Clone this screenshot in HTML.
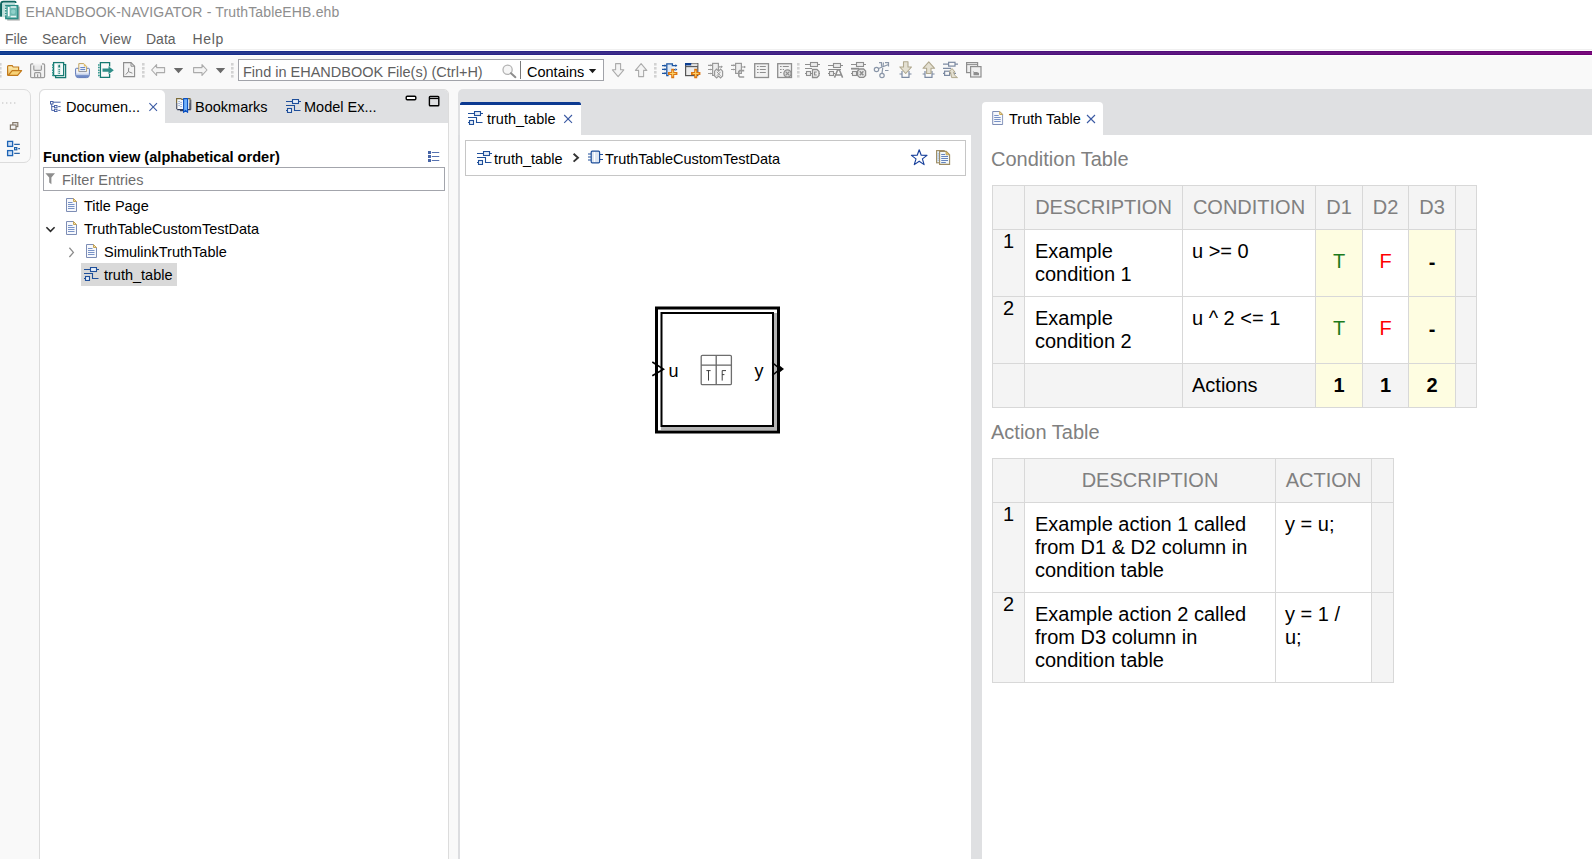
<!DOCTYPE html>
<html><head><meta charset="utf-8">
<style>
*{box-sizing:border-box}
html,body{margin:0;padding:0}
body{width:1592px;height:859px;overflow:hidden;position:relative;background:#f9f9f9;font-family:"Liberation Sans",sans-serif;color:#000}
.a{position:absolute}
.t{position:absolute;white-space:nowrap;line-height:1}
svg.ov{position:absolute;left:0;top:0;width:1592px;height:859px;overflow:visible;z-index:5}
.ui{font-size:14.5px}
.th{margin-top:1px;font-size:20px;line-height:23px;color:#808080;text-align:center;white-space:nowrap}
.td{margin-top:1px;font-size:20px;line-height:23px;color:#000;white-space:nowrap}
</style></head><body>
<!-- top white area -->
<div class="a" style="left:0;top:0;width:1592px;height:56px;background:#fff"></div>
<div class="a" style="left:0;top:49px;width:1592px;height:1px;background:#f0f0f0"></div>
<div class="a" style="left:0;top:51px;width:1592px;height:4px;background:linear-gradient(90deg,#08368f,#3c1a82 50%,#6e0073)"></div>
<div class="a" style="left:0;top:52px;width:1592px;height:2px;background:linear-gradient(90deg,#184293,#472787 50%,#790a7c)"></div>

<!-- title -->
<div class="t" style="left:25.5px;top:5px;font-size:14px;letter-spacing:.15px;color:#8e8e8e">EHANDBOOK-NAVIGATOR - TruthTableEHB.ehb</div>
<!-- menu -->
<div class="t" style="left:5px;top:32px;font-size:14px;color:#606060">File</div>
<div class="t" style="left:42px;top:32px;font-size:14px;color:#606060">Search</div>
<div class="t" style="left:100px;top:32px;font-size:14px;letter-spacing:.35px;color:#606060">View</div>
<div class="t" style="left:146px;top:32px;font-size:14px;color:#606060">Data</div>
<div class="t" style="left:192.5px;top:32px;font-size:14px;letter-spacing:.7px;color:#606060">Help</div>

<!-- search box -->
<div class="a" style="left:238px;top:59px;width:366px;height:22px;background:#fff;border:1px solid #a1a3a9"></div>
<div class="a" style="left:520px;top:61px;width:1px;height:18px;background:#7a7a7a"></div>
<div class="t" style="left:243px;top:65px;font-size:14.5px;color:#5f5f5f">Find in EHANDBOOK File(s) (Ctrl+H)</div>
<div class="t" style="left:527px;top:65px;font-size:14.5px;color:#000">Contains</div>

<!-- left minimized stack -->
<div class="a" style="left:-8px;top:89px;width:39px;height:74px;border:1px solid #dcdcdc;border-radius:0 7px 7px 0;background:#f9f9f9"></div>

<!-- left panel -->
<div class="a" style="left:39px;top:89px;width:410px;height:790px;border:1px solid #dcdcdc;border-radius:5px 5px 0 0;background:#fff;overflow:hidden">
  <div class="a" style="left:0;top:0;width:408px;height:33px;background:#dfe0e2"></div>
  <div class="a" style="left:0;top:0;width:125px;height:34px;background:#fff;border-radius:5px 5px 0 0"></div>
</div>
<div class="t ui" style="left:66px;top:100px;">Documen...</div>
<div class="t ui" style="left:195px;top:100px;">Bookmarks</div>
<div class="t ui" style="left:304px;top:100px;">Model Ex...</div>

<div class="t" style="left:43px;top:150px;font-size:14.6px;font-weight:bold">Function view (alphabetical order)</div>
<div class="a" style="left:43px;top:167px;width:402px;height:24px;border:1px solid #a3a5ac;background:#fff"></div>
<div class="t ui" style="left:62px;top:173px;color:#6d6d6d">Filter Entries</div>
<div class="a" style="left:81px;top:263px;width:96px;height:23px;background:#d9d9d9"></div>
<div class="t ui" style="left:84px;top:199px;">Title Page</div>
<div class="t ui" style="left:84px;top:222px;">TruthTableCustomTestData</div>
<div class="t ui" style="left:104px;top:245px;">SimulinkTruthTable</div>
<div class="t ui" style="left:104px;top:268px;">truth_table</div>

<!-- editor area -->
<div class="a" style="left:458px;top:89px;width:1134px;height:770px;background:#dfe0e2;border-radius:5px 0 0 0"></div>
<div class="a" style="left:458px;top:135px;width:2px;height:724px;background:#dcdde0"></div>
<div class="a" style="left:460px;top:135px;width:511px;height:724px;background:#fff"></div>
<div class="a" style="left:460px;top:102px;width:121px;height:34px;background:#fff"></div>
<div class="a" style="left:460px;top:102px;width:121px;height:3px;background:#0c3a91;border-radius:2px 2px 0 0"></div>
<div class="t ui" style="left:487px;top:112px;">truth_table</div>

<div class="a" style="left:465px;top:140px;width:501px;height:36px;border:1px solid #c6c6c6;background:#fff"></div>
<div class="t ui" style="left:494px;top:152px;">truth_table</div>
<div class="t ui" style="left:605px;top:152px;">TruthTableCustomTestData</div>

<div class="a" style="left:982px;top:135px;width:610px;height:724px;background:#fff"></div>
<div class="a" style="left:982px;top:102px;width:121px;height:34px;background:#fff;border-radius:4px 4px 0 0"></div>
<div class="t ui" style="left:1009px;top:112px;">Truth Table</div>

<div class="a" style="left:993px;top:186px;width:31px;height:43px;background:#f4f4f4"></div>
<div class="a" style="left:1025px;top:186px;width:157px;height:43px;background:#f4f4f4"></div>
<div class="a" style="left:1183px;top:186px;width:132px;height:43px;background:#f4f4f4"></div>
<div class="a" style="left:1316px;top:186px;width:46px;height:43px;background:#f4f4f4"></div>
<div class="a" style="left:1363px;top:186px;width:45px;height:43px;background:#f4f4f4"></div>
<div class="a" style="left:1409px;top:186px;width:46px;height:43px;background:#f4f4f4"></div>
<div class="a" style="left:1456px;top:186px;width:20px;height:43px;background:#f4f4f4"></div>
<div class="a" style="left:993px;top:230px;width:31px;height:66px;background:#f4f4f4"></div>
<div class="a" style="left:1025px;top:230px;width:157px;height:66px;background:#fff"></div>
<div class="a" style="left:1183px;top:230px;width:132px;height:66px;background:#fff"></div>
<div class="a" style="left:1316px;top:230px;width:46px;height:66px;background:#fefde1"></div>
<div class="a" style="left:1363px;top:230px;width:45px;height:66px;background:#fff"></div>
<div class="a" style="left:1409px;top:230px;width:46px;height:66px;background:#fefde1"></div>
<div class="a" style="left:1456px;top:230px;width:20px;height:66px;background:#f4f4f4"></div>
<div class="a" style="left:993px;top:297px;width:31px;height:66px;background:#f4f4f4"></div>
<div class="a" style="left:1025px;top:297px;width:157px;height:66px;background:#fff"></div>
<div class="a" style="left:1183px;top:297px;width:132px;height:66px;background:#fff"></div>
<div class="a" style="left:1316px;top:297px;width:46px;height:66px;background:#fefde1"></div>
<div class="a" style="left:1363px;top:297px;width:45px;height:66px;background:#fff"></div>
<div class="a" style="left:1409px;top:297px;width:46px;height:66px;background:#fefde1"></div>
<div class="a" style="left:1456px;top:297px;width:20px;height:66px;background:#f4f4f4"></div>
<div class="a" style="left:993px;top:364px;width:31px;height:43px;background:#f4f4f4"></div>
<div class="a" style="left:1025px;top:364px;width:157px;height:43px;background:#f4f4f4"></div>
<div class="a" style="left:1183px;top:364px;width:132px;height:43px;background:#f4f4f4"></div>
<div class="a" style="left:1316px;top:364px;width:46px;height:43px;background:#fefde1"></div>
<div class="a" style="left:1363px;top:364px;width:45px;height:43px;background:#f4f4f4"></div>
<div class="a" style="left:1409px;top:364px;width:46px;height:43px;background:#fefde1"></div>
<div class="a" style="left:1456px;top:364px;width:20px;height:43px;background:#f4f4f4"></div>
<div class="a" style="left:992px;top:185px;width:1px;height:223px;background:#d8d8d8"></div>
<div class="a" style="left:1024px;top:185px;width:1px;height:223px;background:#d8d8d8"></div>
<div class="a" style="left:1182px;top:185px;width:1px;height:223px;background:#d8d8d8"></div>
<div class="a" style="left:1315px;top:185px;width:1px;height:223px;background:#d8d8d8"></div>
<div class="a" style="left:1362px;top:185px;width:1px;height:223px;background:#d8d8d8"></div>
<div class="a" style="left:1408px;top:185px;width:1px;height:223px;background:#d8d8d8"></div>
<div class="a" style="left:1455px;top:185px;width:1px;height:223px;background:#d8d8d8"></div>
<div class="a" style="left:1476px;top:185px;width:1px;height:223px;background:#d8d8d8"></div>
<div class="a" style="left:992px;top:185px;width:485px;height:1px;background:#d8d8d8"></div>
<div class="a" style="left:992px;top:229px;width:485px;height:1px;background:#d8d8d8"></div>
<div class="a" style="left:992px;top:296px;width:485px;height:1px;background:#d8d8d8"></div>
<div class="a" style="left:992px;top:363px;width:485px;height:1px;background:#d8d8d8"></div>
<div class="a" style="left:992px;top:407px;width:485px;height:1px;background:#d8d8d8"></div>
<div class="a" style="left:993px;top:459px;width:31px;height:43px;background:#f4f4f4"></div>
<div class="a" style="left:1025px;top:459px;width:250px;height:43px;background:#f4f4f4"></div>
<div class="a" style="left:1276px;top:459px;width:95px;height:43px;background:#f4f4f4"></div>
<div class="a" style="left:1372px;top:459px;width:21px;height:43px;background:#f4f4f4"></div>
<div class="a" style="left:993px;top:503px;width:31px;height:89px;background:#f4f4f4"></div>
<div class="a" style="left:1025px;top:503px;width:250px;height:89px;background:#fff"></div>
<div class="a" style="left:1276px;top:503px;width:95px;height:89px;background:#fff"></div>
<div class="a" style="left:1372px;top:503px;width:21px;height:89px;background:#f4f4f4"></div>
<div class="a" style="left:993px;top:593px;width:31px;height:89px;background:#f4f4f4"></div>
<div class="a" style="left:1025px;top:593px;width:250px;height:89px;background:#fff"></div>
<div class="a" style="left:1276px;top:593px;width:95px;height:89px;background:#fff"></div>
<div class="a" style="left:1372px;top:593px;width:21px;height:89px;background:#f4f4f4"></div>
<div class="a" style="left:992px;top:458px;width:1px;height:225px;background:#d8d8d8"></div>
<div class="a" style="left:1024px;top:458px;width:1px;height:225px;background:#d8d8d8"></div>
<div class="a" style="left:1275px;top:458px;width:1px;height:225px;background:#d8d8d8"></div>
<div class="a" style="left:1371px;top:458px;width:1px;height:225px;background:#d8d8d8"></div>
<div class="a" style="left:1393px;top:458px;width:1px;height:225px;background:#d8d8d8"></div>
<div class="a" style="left:992px;top:458px;width:402px;height:1px;background:#d8d8d8"></div>
<div class="a" style="left:992px;top:502px;width:402px;height:1px;background:#d8d8d8"></div>
<div class="a" style="left:992px;top:592px;width:402px;height:1px;background:#d8d8d8"></div>
<div class="a" style="left:992px;top:682px;width:402px;height:1px;background:#d8d8d8"></div>

<div class="t" style="left:991px;top:148px;font-size:20px;line-height:23px;color:#808080">Condition Table</div>
<div class="a th" style="left:1025px;top:195px;width:157px">DESCRIPTION</div>
<div class="a th" style="left:1183px;top:195px;width:132px">CONDITION</div>
<div class="a th" style="left:1316px;top:195px;width:46px">D1</div>
<div class="a th" style="left:1363px;top:195px;width:45px">D2</div>
<div class="a th" style="left:1409px;top:195px;width:46px">D3</div>
<div class="a td" style="left:993px;top:229px;width:31px;text-align:center">1</div>
<div class="a td" style="left:1035px;top:239px">Example<br>condition 1</div>
<div class="a td" style="left:1192px;top:239px">u &gt;= 0</div>
<div class="a td" style="left:1316px;top:249px;width:46px;text-align:center;color:#1c7a1c">T</div>
<div class="a td" style="left:1363px;top:249px;width:45px;text-align:center;color:#f00">F</div>
<div class="a td" style="left:1409px;top:250px;width:46px;text-align:center;font-weight:bold">-</div>
<div class="a td" style="left:993px;top:296px;width:31px;text-align:center">2</div>
<div class="a td" style="left:1035px;top:306px">Example<br>condition 2</div>
<div class="a td" style="left:1192px;top:306px">u ^ 2 &lt;= 1</div>
<div class="a td" style="left:1316px;top:316px;width:46px;text-align:center;color:#1c7a1c">T</div>
<div class="a td" style="left:1363px;top:316px;width:45px;text-align:center;color:#f00">F</div>
<div class="a td" style="left:1409px;top:317px;width:46px;text-align:center;font-weight:bold">-</div>
<div class="a td" style="left:1192px;top:373px">Actions</div>
<div class="a td" style="left:1316px;top:373px;width:46px;text-align:center;font-weight:bold">1</div>
<div class="a td" style="left:1363px;top:373px;width:45px;text-align:center;font-weight:bold">1</div>
<div class="a td" style="left:1409px;top:373px;width:46px;text-align:center;font-weight:bold">2</div>

<div class="t" style="left:991px;top:421px;font-size:20px;line-height:23px;color:#808080">Action Table</div>
<div class="a th" style="left:1025px;top:468px;width:250px">DESCRIPTION</div>
<div class="a th" style="left:1276px;top:468px;width:95px">ACTION</div>
<div class="a td" style="left:993px;top:502px;width:31px;text-align:center">1</div>
<div class="a td" style="left:1035px;top:512px">Example action 1 called<br>from D1 &amp; D2 column in<br>condition table</div>
<div class="a td" style="left:1285px;top:512px">y = u;</div>
<div class="a td" style="left:993px;top:592px;width:31px;text-align:center">2</div>
<div class="a td" style="left:1035px;top:602px">Example action 2 called<br>from D3 column in<br>condition table</div>
<div class="a td" style="left:1285px;top:602px">y = 1 /<br>u;</div>

<svg class="ov" viewBox="0 0 1592 859">
<g id="diagram">
 <rect x="656.5" y="308" width="122" height="124" fill="none" stroke="#000" stroke-width="3"/>
 <rect x="774" y="313" width="3" height="117" fill="#b4b4b4"/>
 <rect x="661" y="427" width="116" height="3" fill="#b4b4b4"/>
 <rect x="661.5" y="313" width="111.5" height="113" fill="#fff" stroke="#000" stroke-width="2"/>
 <path d="M652.3 362 L663.5 369.2 L652.3 375.8" fill="none" stroke="#000" stroke-width="1.6"/>
 <path d="M772.2 362.5 L780 369 L772.2 375.5" fill="none" stroke="#000" stroke-width="1.6"/>
 <path d="M779.5 365.5 L784 369 L779.5 372.5 Z" fill="#000"/>
 <rect x="701.2" y="355.4" width="30.2" height="29.2" rx="1.2" fill="none" stroke="#6e6e6e" stroke-width="1.3"/>
 <path d="M716.2 355.4 V384.6 M701.2 365.1 H731.4" stroke="#666" stroke-width="1.3"/>
 <path d="M706.4 370.6 H710.6 M708.5 370.6 V380.6" stroke="#2a2a2a" stroke-width=".9"/>
 <path d="M722.2 380.6 V370.6 H726 M722.2 374.6 H724.4" stroke="#2a2a2a" stroke-width=".9" fill="none"/>
</g>
</svg>
<div class="t" style="left:668.5px;top:362px;font-size:18px;color:#000;z-index:6">u</div>
<div class="t" style="left:754.5px;top:362px;font-size:18px;color:#000;z-index:6">y</div>

<!-- ICONS --><svg class="ov" viewBox="0 0 1592 859" style="z-index:7">
<defs>
 <symbol id="struct" viewBox="0 0 15 14">
  <rect x="6.5" y="0.5" width="6" height="4" fill="#e6eef9" stroke="#1f4f9a" stroke-width="1.1"/>
  <path d="M0 2.5 H6.5 M12.5 2.5 H15 M0 6.5 H8.5 V11.5 H14.5 M0 11.5 H1.5" fill="none" stroke="#1f4f9a" stroke-width="1.1"/>
  <rect x="1.5" y="9.5" width="4" height="4" fill="#e6eef9" stroke="#1f4f9a" stroke-width="1.1"/>
 </symbol>
 <symbol id="doc" viewBox="0 0 11 14">
  <path d="M0.5 0.5 H7.5 L10.5 3.5 V13.5 H0.5 Z" fill="#f6f8fc" stroke="#7d8db5" stroke-width="1"/>
  <path d="M7.5 0.5 V3.5 H10.5 Z" fill="#f3e2a6" stroke="#c4a45a" stroke-width="1"/>
  <path d="M2 4.5 H6.5 M2 6.5 H8.5 M2 8.5 H8.5 M2 10.5 H8.5" stroke="#6a86c0" stroke-width=".9"/>
 </symbol>
 <symbol id="grip" viewBox="0 0 3 15">
  <rect x="0" y="0" width="2.6" height="2.6" fill="#d2d2d2"/>
  <rect x="0" y="4" width="2.6" height="2.6" fill="#d2d2d2"/>
  <rect x="0" y="8" width="2.6" height="2.6" fill="#d2d2d2"/>
  <rect x="0" y="12" width="2.6" height="2.6" fill="#d2d2d2"/>
 </symbol>
 <symbol id="plus" viewBox="0 0 10 10">
  <path d="M5 0.8 V9.2 M0.8 5 H9.2" stroke="#dc7612" stroke-width="3.2" stroke-linecap="square"/>
  <path d="M5 1.8 V8.2 M1.8 5 H8.2" stroke="#fbd26a" stroke-width="1.2"/>
 </symbol>
 <linearGradient id="prg" x1="0" y1="0" x2="0" y2="1"><stop offset="0" stop-color="#f4f7fc"/><stop offset=".45" stop-color="#f0f3fa"/><stop offset="1" stop-color="#7f99cf"/></linearGradient>
 <linearGradient id="fold" x1="0" y1="0" x2="0" y2="1"><stop offset="0" stop-color="#fdf0b8"/><stop offset="1" stop-color="#f0c060"/></linearGradient>
</defs>

<!-- app icon -->
<g>
 <path d="M1 16.5 V4 Q1 1.6 3.4 1.6 H14.6 Q15.8 1.6 15.8 3" fill="#d6ebe8" stroke="#0f6660" stroke-width="1.6"/>
 <rect x="0.2" y="3.5" width="2" height="13" fill="#0f6660"/>
 <rect x="2.2" y="3.2" width="12.8" height="14" fill="#bfe0dc"/>
 <rect x="7.2" y="6.6" width="12.6" height="14" fill="#9a9a9a" opacity=".75"/>
 <rect x="5.8" y="5.6" width="12" height="13" fill="#6cb8b1" stroke="#2a8c85" stroke-width="1.4"/>
 <path d="M4.8 7 H6.4 M4.8 9.6 H6.4 M4.8 12.2 H6.4 M4.8 14.8 H6.4" stroke="#fff" stroke-width="1"/>
 <path d="M8.8 7 V16.2" stroke="#fff" stroke-width="1.6"/>
 <path d="M10.6 7 H16.2 M10.6 16.4 H16.2" stroke="#e9f5f4" stroke-width="1.5"/>
 <circle cx="13.2" cy="11.8" r="2.2" fill="#8fd0c9"/>
</g>
<!-- toolbar -->
<use href="#grip" x="-1" y="63" width="3" height="15"/>
<path d="M7.6 75.4 V66.6 Q7.6 65.6 8.6 65.6 H12.2 L13.2 67 H18.6 V70.5" fill="url(#fold)" stroke="#c27a1c" stroke-width="1.2"/>
<path d="M8.2 75.4 L12.2 70.6 H21.6 L17.6 75.4 Z" fill="#f7d377" stroke="#c27a1c" stroke-width="1.2" stroke-linejoin="round"/>

<path d="M30.6 65 Q30.6 63.8 31.8 63.8 H43.4 Q44.6 63.8 44.6 65 V76.4 Q44.6 77.6 43.4 77.6 H31.8 Q30.6 77.6 30.6 76.4 Z" fill="#f1f1f1"/>
<path d="M33.2 63.8 H31.8 Q30.6 63.8 30.6 65 V76.4 Q30.6 77.6 31.8 77.6 H43.4 Q44.6 77.6 44.6 76.4 V65 Q44.6 63.8 43.4 63.8 H42" fill="none" stroke="#9b9b9b" stroke-width="1.2"/>
<path d="M33.8 65.4 V69.2 Q33.8 70.4 35 70.4 H40.2 Q41.4 70.4 41.4 69.2 V65.4" fill="#e9e9e9" stroke="#9b9b9b" stroke-width="1.2"/>
<path d="M34.6 77.4 V73.6 Q34.6 72.6 35.6 72.6 H39.6 Q40.6 72.6 40.6 73.6 V77.4 M37.6 74.2 V77.4" fill="none" stroke="#9b9b9b" stroke-width="1.2"/>
<rect x="55.6" y="64.6" width="10" height="13" fill="#fff" stroke="#167a72" stroke-width="1.3"/>
<rect x="53.6" y="62.6" width="10" height="13" fill="#fff" stroke="#167a72" stroke-width="1.3"/>
<path d="M52 64 L54.4 65 L52 66 Z M52 66.6 L54.4 67.6 L52 68.6 Z M52 69.2 L54.4 70.2 L52 71.2 Z M52 71.8 L54.4 72.8 L52 73.8 Z M52 74.2 L54.4 75.2 L52 76.2 Z" fill="#3a9a92"/>
<rect x="57" y="64" width="4.4" height="10.5" fill="#e3f1ef"/>
<path d="M58.2 67.6 Q58.2 64.6 59.2 64.6 Q60.2 64.6 60.2 67.6 Z" fill="#1f7f78"/>
<path d="M59.2 69.2 V70.2 M59.2 71.3 V72.3 M59.2 73.2 V74" stroke="#1f7f78" stroke-width="1.6"/>

<path d="M75.6 68.8 Q75.6 68.3 76.6 68.3 H88.6 Q89.4 68.3 89.4 69.2 V74.5 Q89.4 77.6 86.6 77.6 H78.4 Q75.6 77.6 75.6 74.5 Z" fill="url(#prg)" stroke="#6079b8" stroke-width="1"/>
<rect x="76.3" y="75.2" width="12.4" height="2" fill="#6f8ac6"/>
<path d="M78.8 71.6 V63.6 H83.8 L86.6 66.4 V71.6" fill="#f3f6fb" stroke="#c3a45e" stroke-width="1"/>
<path d="M83.8 63.6 V66.4 H86.6 Z" fill="#e8c46a"/>
<path d="M78.8 71.6 H86.6" stroke="#8a8f9a" stroke-width="1"/>
<path d="M80.3 67.6 H85.2 M80.3 69.6 H85.2" stroke="#5b7cc0" stroke-width="1"/>
<path d="M109.6 66.4 V62.6 H100.4 V77.4 H109.6 V74" fill="none" stroke="#167a72" stroke-width="1.3"/>
<path d="M98 64 L100.4 65 L98 66 Z M98 66.6 L100.4 67.6 L98 68.6 Z M98 69.2 L100.4 70.2 L98 71.2 Z M98 71.8 L100.4 72.8 L98 73.8 Z M98 74.4 L100.4 75.4 L98 76.4 Z" fill="#3a9a92"/>
<path d="M102.5 68.6 H108.5 V66.2 L113.8 70.2 L108.5 74.2 V71.8 H102.5 Z" fill="#2f8e88"/>

<path d="M123.6 62.6 H131 L134.6 66.2 V76.6 H123.6 Z" fill="#f3f3f3" stroke="#8d8d8d" stroke-width="1.1"/>
<path d="M131 62.6 V66.2 H134.6" fill="none" stroke="#8d8d8d" stroke-width="1"/>
<path d="M125.8 74.6 L128.4 71.6 L128.8 67.8 M128.4 71.6 L132.4 73.2" fill="none" stroke="#8d8d8d" stroke-width="1"/>

<use href="#grip" x="142" y="63" width="3" height="15"/>
<path d="M151.6 70 L156.6 64.6 V67.6 H164.6 V72.6 H156.6 V75.4 Z" fill="#f4f4f4" stroke="#ababab" stroke-width="1.1" stroke-linejoin="round"/>
<path d="M173.8 68 H183.2 L178.5 73.2 Z" fill="#6a6a6a"/>
<path d="M207 70 L202 64.6 V67.6 H193.6 V72.6 H202 V75.4 Z" fill="#f4f4f4" stroke="#ababab" stroke-width="1.1" stroke-linejoin="round"/>
<path d="M215.8 68 H225.2 L220.5 73.2 Z" fill="#6a6a6a"/>
<use href="#grip" x="231" y="63" width="3" height="15"/>

<circle cx="507.6" cy="69.8" r="4.6" fill="#f6f6f6" stroke="#b3b3b3" stroke-width="1.3"/>
<path d="M511 73.2 L515.4 77.2" stroke="#8e8e8e" stroke-width="2" stroke-linecap="round"/>
<path d="M588.8 69 H596.2 L592.5 73.2 Z" fill="#1a1a1a"/>

<path d="M615.6 63.6 H620.6 V69.8 H623.8 L618.1 76.6 L612.4 69.8 H615.6 Z" fill="#f4f4f4" stroke="#ababab" stroke-width="1.1" stroke-linejoin="round"/>
<path d="M638.6 76.6 H643.6 V70.4 H646.8 L641.1 63.6 L635.4 70.4 H638.6 Z" fill="#f4f4f4" stroke="#ababab" stroke-width="1.1" stroke-linejoin="round"/>
<use href="#grip" x="654" y="63" width="3" height="15"/>

<!-- icon 1 -->
<rect x="667.2" y="63.8" width="5" height="11.5" fill="#dde8f4"/>
<path d="M672.4 66.2 V63.8 H666.8 V75.6 H668.6" fill="none" stroke="#1d56a3" stroke-width="1.3"/>
<path d="M662 65.6 H666 M662 69.4 H666 M662 73.3 H666 M673 65.6 H676.6 M673 69.6 H675" stroke="#1d56a3" stroke-width="1.3"/>
<path d="M664.6 64.3 L666.4 65.6 L664.6 66.9 Z M664.6 68.1 L666.4 69.4 L664.6 70.7 Z M664.6 72 L666.4 73.3 L664.6 74.6 Z M675.4 64.3 L677.4 65.6 L675.4 66.9 Z M675.4 68.3 L677.4 69.6 L675.4 70.9 Z" fill="#1d56a3"/>
<use href="#plus" x="668" y="68.8" width="9.4" height="9.4"/>
<!-- icon 2 -->
<rect x="685.6" y="63.6" width="12.2" height="12" fill="#ececec" stroke="#555" stroke-width="1.2"/>
<rect x="685" y="63" width="6.4" height="2.4" fill="#0b3d91"/>
<rect x="691.4" y="63.6" width="6" height="2" fill="#dcdcdc"/>
<path d="M685.6 66.6 H697.8" stroke="#555" stroke-width="1.1"/>
<use href="#plus" x="691" y="68.8" width="9.4" height="9.4"/>
<!-- icon 3 -->
<path d="M708 65.3 H712 M708 69.5 H712 M708 73.5 H712 M718.6 66.8 H722" stroke="#9a9a9a" stroke-width="1.2"/>
<path d="M710.4 64.2 L712.2 65.3 L710.4 66.4 Z M710.4 68.4 L712.2 69.5 L710.4 70.6 Z M710.4 72.4 L712.2 73.5 L710.4 74.6 Z M721 65.6 L723 66.8 L721 68 Z" fill="#9a9a9a"/>
<rect x="712.6" y="63.4" width="5.8" height="12" fill="#eee" stroke="#9a9a9a" stroke-width="1.2"/>
<path d="M714.6 71.2 L716.6 69.2 L718.6 71.2 L720.6 69.2 L722.6 71.2 V76 L720.6 78 L718.6 76 L716.6 78 L714.6 76 Z" fill="#f2f2f2" stroke="#9a9a9a" stroke-width="1.2"/>
<path d="M716.8 71.8 L720.6 75.8 M720.6 71.8 L716.8 75.8" stroke="#9a9a9a" stroke-width="1"/>
<!-- icon 4 -->
<path d="M731 65.3 H735 M731 69.5 H735 M741.4 67 H745" stroke="#9a9a9a" stroke-width="1.2"/>
<path d="M733.4 64.2 L735.2 65.3 L733.4 66.4 Z M733.4 68.4 L735.2 69.5 L733.4 70.6 Z M744 65.8 L746 67 L744 68.2 Z" fill="#9a9a9a"/>
<rect x="735.6" y="63.4" width="5.8" height="10" fill="#eee" stroke="#9a9a9a" stroke-width="1.2"/>
<path d="M744.2 70.6 H739.8 L738.8 71.6 V76 L739.8 77 H744.2" fill="none" stroke="#9a9a9a" stroke-width="1.6"/>
<!-- icon 5 list -->
<rect x="754.7" y="63.7" width="13.8" height="13.8" fill="#f2f2f2" stroke="#8e8e8e" stroke-width="1.3"/>
<path d="M757 66.5 H758.6 M759.8 66.5 H765.8 M757 69.5 H758.6 M759.8 69.5 H765.8 M757 72.5 H758.6 M759.8 72.5 H765.8" stroke="#8e8e8e" stroke-width="1.1"/>
<!-- icon 6 -->
<rect x="777.7" y="63.7" width="13.8" height="13.8" fill="#f2f2f2" stroke="#8e8e8e" stroke-width="1.3"/>
<path d="M780 66.5 H781.6 M782.8 66.5 H788.8 M780 69.5 H781.6 M780 72.5 H781.6 M782.8 69.5 H784" stroke="#8e8e8e" stroke-width="1.1"/>
<circle cx="787.5" cy="73.5" r="3.6" fill="#ddd" stroke="#8e8e8e" stroke-width="1.3"/>
<path d="M785.6 71.6 L789.4 75.4 M789.4 71.6 L785.6 75.4" stroke="#8e8e8e" stroke-width="1.2"/>
<use href="#grip" x="797" y="63" width="3" height="15"/>
<!-- struct-like gray icons -->
<g fill="none" stroke="#8e8e8e" stroke-width="1.1">
 <rect x="810.5" y="62.5" width="7" height="4" fill="#ececec"/>
 <path d="M805 64.5 H810.5 M817.5 64.5 H820 M805 68.5 H812 M805 73.5 H806.5 M810.5 73.5 H812.5 M818.6 73.5 H820"/>
 <rect x="806.5" y="71.5" width="4" height="4" fill="#ececec"/>
 <path d="M812.5 77.5 V69.5 H817 L819 71.5 V75.5 L817 77.5 Z" fill="#f2f2f2" stroke-width="1.3"/>
 <path d="M816.8 72 H814.6 V75 H816.8" stroke-width="1.2"/>

 <rect x="833.5" y="63.5" width="7" height="4" fill="#ececec"/>
 <path d="M828 65.5 H833.5 M840.5 65.5 H843 M828 69.5 H841 M828 73.5 H829.5 M833.5 73.5 H835"/>
 <rect x="829.5" y="71.5" width="4" height="4" fill="#ececec"/>
 <path d="M834.5 77.6 L837.6 70 H839.4 L842.6 77.6 M836 75 H841" stroke-width="1.5"/>

 <rect x="856.5" y="62.5" width="7" height="4" fill="#ececec"/>
 <path d="M851 64.5 H856.5 M863.5 64.5 H866 M851 73.5 H852.5"/>
 <rect x="852.5" y="71.5" width="4" height="4" fill="#ececec"/>
 <path d="M859.6 69 H863.6 L865.6 71 V75.4 L863.6 77.4 H859.6 L857.6 75.4 V71 Z" fill="#e8e8e8" stroke-width="1.3"/>
 <path d="M859.8 71.2 L863.4 75.2 M863.4 71.2 L859.8 75.2" stroke-width="1.5"/>
</g>
<path d="M851 68.7 H859" stroke="#8e8e8e" stroke-width="1.8"/>
<!-- scissors -->
<g fill="none" stroke="#8a96a8" stroke-width="1.2">
 <circle cx="876.5" cy="69.5" r="2.2"/>
 <circle cx="882" cy="75.5" r="2.2"/>
 <path d="M878.5 68.5 L888.5 64.5 M882 73.3 L883.5 62.5 M879 62.6 H881.5 V66.5 M885 62.6 H888.5 V66.5 M885 70.5 H888.5"/>
</g>
<!-- down into block -->
<path d="M899.5 74 H902 M909 74 H911.5 M902 71 V77.4 H909 V71" fill="none" stroke="#7c8aa2" stroke-width="1.2"/>
<path d="M903.5 61.8 H908 V67 H911.5 L905.7 73.5 L899.8 67 H903.5 Z" fill="#e4e0d2" stroke="#b0a88e" stroke-width="1.1" stroke-linejoin="round"/>
<!-- up from block -->
<path d="M922.6 74 H925 M932 74 H934.6 M925 71 V77.4 H932 V71" fill="none" stroke="#7c8aa2" stroke-width="1.2"/>
<path d="M926.6 73.5 H931 V68.3 H934.6 L928.8 61.8 L923 68.3 H926.6 Z" fill="#e4e0d2" stroke="#b0a88e" stroke-width="1.1" stroke-linejoin="round"/>
<!-- struct w arrow -->
<g fill="none" stroke="#7c8aa2" stroke-width="1.2">
 <rect x="948.6" y="62.3" width="6.4" height="3.8"/>
 <path d="M943 64.2 H948.6 M955 64.2 H958 M943 68.4 H951 M943 73.4 H944.6 M950 73.4 H956"/>
 <rect x="944.6" y="71.2" width="5" height="4.2"/>
</g>
<path d="M951.6 77.6 L950.5 72 L949 72 L952 68.5 L955 72 L953.5 72 Q954 76 957.5 77.6 Z" fill="#e4e0d2" stroke="#b0a88e" stroke-width="1"/>
<!-- windows -->
<rect x="966.6" y="62.6" width="11" height="10" fill="#efefef" stroke="#8e8e8e" stroke-width="1.2"/>
<path d="M966.6 64.6 H977.6" stroke="#8e8e8e" stroke-width="1"/>
<rect x="970.6" y="66.6" width="10.4" height="10.4" fill="#efefef" stroke="#8e8e8e" stroke-width="1.2"/>
<path d="M972.5 71 H973.5 V75.3 H979 V73 L977 72 L974.5 72 Z" fill="#8e8e8e"/>

<!-- minimized stack -->
<path d="M2 103 H3.4 M6 103 H7.4 M10 103 H11.4 M14 103 H15.4" stroke="#bdbdbd" stroke-width="1.2"/>
<rect x="12.8" y="122.6" width="5" height="4" fill="#f4f4f4" stroke="#867a6c" stroke-width="1.2"/>
<rect x="10.4" y="125" width="5.6" height="4.4" fill="#f4f4f4" stroke="#867a6c" stroke-width="1.2"/>
<rect x="7.6" y="141.4" width="5" height="5" fill="#cfe0f5" stroke="#1e64b5" stroke-width="1.3"/>
<rect x="7.6" y="150.6" width="5" height="5" fill="#cfe0f5" stroke="#1e64b5" stroke-width="1.3"/>
<rect x="14.6" y="147.6" width="2.2" height="2.2" fill="#fff" stroke="#1a5fa8" stroke-width="1.2"/>
<path d="M14.2 144.4 H19.8 M18.2 148.6 H20 M14.2 153.4 H19.8" stroke="#2a65a8" stroke-width="1.1"/>

<!-- left tabs -->
<g fill="none" stroke="#4a64a8" stroke-width="1">
 <rect x="50.5" y="101.5" width="2.5" height="2.5"/>
 <rect x="54.5" y="105.5" width="2.5" height="2.2"/>
 <rect x="54.5" y="109.3" width="2.5" height="2.2"/>
 <path d="M51.7 104 V110.4 H54.5 M51.7 106.6 H54.5 M53 102.2 H60.6 M58.2 106.6 H60.6 M58.2 110.4 H60.6"/>
</g>
<path d="M149.4 103.2 L157 110.8 M157 103.2 L149.4 110.8" stroke="#3b5aa3" stroke-width="1.1"/>
<!-- bookmarks icon -->
<rect x="176.8" y="98.8" width="13.4" height="10.4" fill="#f4f8fd"/>
<path d="M176.6 109 V98.6 H181 L181.8 99.4 H184 M187.6 98.6 H190 V109" fill="none" stroke="#7d6c3a" stroke-width="1.2"/>
<path d="M176.6 103 V109.2 M190 103 V109.2" stroke="#5c6275" stroke-width="1.2"/>
<path d="M177.2 109.6 H190.8 M180 110.7 H184" stroke="#2f3a5a" stroke-width="1.2"/>
<path d="M190.8 99.6 V109.6" stroke="#4a5068" stroke-width="1"/>
<path d="M178.2 101.6 H180 M180.2 102.4 H182 M178.2 103.6 H180 M180.2 104.4 H182 M178.2 105.6 H180 M180.2 106.6 H182" stroke="#8aa0c8" stroke-width=".8"/>
<path d="M183.6 98.6 H187.6 V112.4 L185.6 110.4 L183.6 112.4 Z" fill="#72b2fa" stroke="#0a4fc0" stroke-width="1.1" stroke-linejoin="round"/>
<use href="#struct" x="286" y="99" width="15" height="14"/>
<rect x="406.2" y="96.2" width="9.6" height="3.6" rx="1" fill="#fff" stroke="#000" stroke-width="1.4"/>
<rect x="429.4" y="96.4" width="9.4" height="9.4" rx=".8" fill="none" stroke="#000" stroke-width="1.4"/>
<path d="M429.4 98.4 H438.8" stroke="#000" stroke-width="1.4"/>

<!-- function view -->
<rect x="428" y="151" width="3" height="3" fill="#4764a6"/><rect x="428" y="155" width="3" height="3" fill="#4764a6"/><rect x="428" y="159" width="3" height="3" fill="#4764a6"/>
<path d="M432.3 152.5 H438.8 M432.3 156.5 H438.8 M432.3 160.5 H438.8" stroke="#5571b0" stroke-width="1.2" stroke-linecap="round"/>
<path d="M45.4 173.2 H55 L51.4 177.4 V184.2 L49.2 182.4 V177.4 Z" fill="#8e8e8e"/>
<use href="#doc" x="66" y="198" width="11" height="14"/>
<use href="#doc" x="66" y="221" width="11" height="14"/>
<use href="#doc" x="86" y="244" width="11" height="14"/>
<path d="M46.4 227.2 L50.5 231.3 L54.6 227.2" fill="none" stroke="#2a2a2a" stroke-width="1.6"/>
<path d="M69.4 247.8 L73.4 252.4 L69.4 257" fill="none" stroke="#8c8c8c" stroke-width="1.3"/>
<use href="#struct" x="84" y="267" width="15" height="14"/>

<!-- center tab -->
<use href="#struct" x="468" y="111" width="15" height="14"/>
<path d="M564.2 115 L572 122.8 M572 115 L564.2 122.8" stroke="#3b5aa3" stroke-width="1.1"/>
<use href="#struct" x="477" y="151" width="15" height="14"/>
<path d="M573.6 153.8 L578 157.7 L573.6 161.6" fill="none" stroke="#333" stroke-width="1.9"/>
<!-- block icon breadcrumb -->
<rect x="591.2" y="151.2" width="8.4" height="11.6" rx="1" fill="#dde6f2" stroke="#1f4f9a" stroke-width="1.2"/>
<path d="M588 154 H591 M588 157 H591 M588 160 H591 M599.6 154.5 H603 M599.6 159.5 H603" stroke="#1f4f9a" stroke-width="1.1"/>
<path d="M594.5 152 V162" stroke="#fff" stroke-width="1"/>
<!-- star -->
<path d="M919.2 149.8 L921.2 155.3 L927 155.4 L922.4 158.9 L924.1 164.6 L919.2 161.2 L914.3 164.6 L916 158.9 L911.4 155.4 L917.2 155.3 Z" fill="none" stroke="#1a429c" stroke-width="1.15" stroke-linejoin="round"/>
<!-- copy -->
<rect x="936.6" y="150.6" width="7.6" height="12.2" fill="#e6f2f8" stroke="#9c8a62" stroke-width="1.1"/>
<path d="M938.2 153.5 V154.3 M938.2 155.6 V156.4 M938.2 157.7 V158.5 M938.2 159.8 V160.6" stroke="#5b7cc0" stroke-width="1"/>
<path d="M939.6 151.4 H946.2 L949.6 154.8 V164.4 H939.6 Z" fill="#f2f8fb" stroke="#9c8a62" stroke-width="1.1"/>
<path d="M946 151.4 V154.8 H949.6 Z" fill="#e8c76a" stroke="#b49a58" stroke-width=".8"/>
<path d="M941.2 154.5 H945 M941.2 156.5 H948 M941.2 158.5 H948 M941.2 160.5 H948 M941.2 162.5 H945.8" stroke="#6584bd" stroke-width="1"/>
<!-- right tab -->
<use href="#doc" x="992" y="111" width="11.4" height="14"/>
<path d="M1087 115 L1095 123 M1095 115 L1087 123" stroke="#3b5aa3" stroke-width="1.1"/>
</svg>
<!-- /ICONS -->
</body></html>
